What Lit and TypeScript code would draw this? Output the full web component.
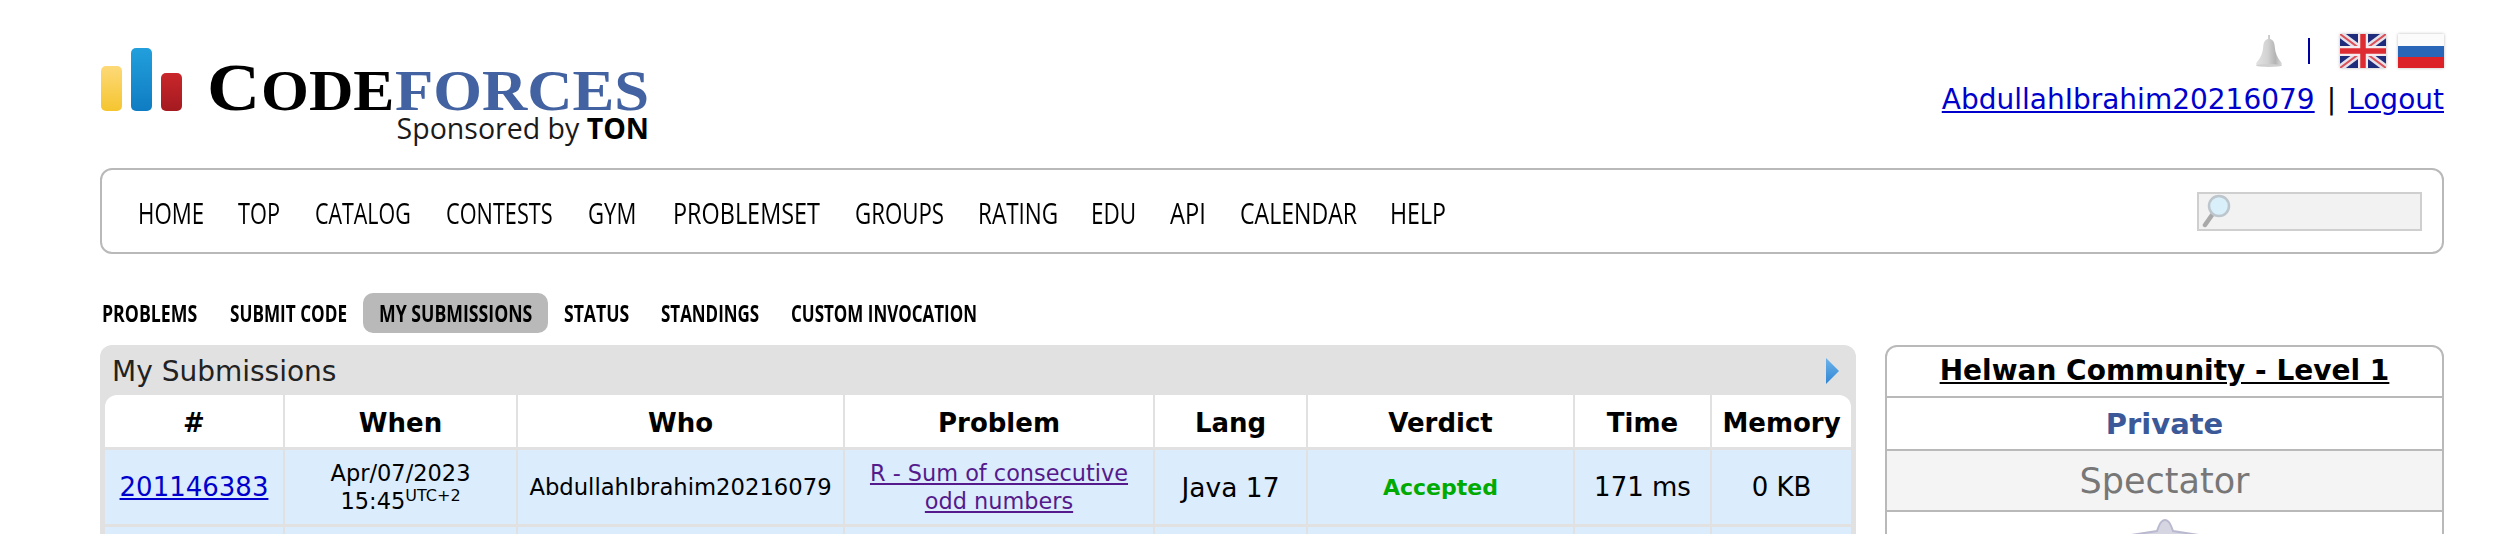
import { LitElement, html, css, svg } from "lit";
import { customElement } from "lit/decorators.js";

// label, text width, cell width: no condensed face here, so labels get squeezed to the widths below
const MENU: [string, number, number][] = [
  ["HOME", 66, 100], ["TOP", 42, 77], ["CATALOG", 96, 131], ["CONTESTS", 107, 142], ["GYM", 48, 85], ["PROBLEMSET", 147, 182],
  ["GROUPS", 89, 123], ["RATING", 80, 113], ["EDU", 45, 79], ["API", 36, 70], ["CALENDAR", 117, 150], ["HELP", 56, 56],
];
const TABS: [string, number][] = [
  ["PROBLEMS", 95.5], ["SUBMIT CODE", 117], ["MY SUBMISSIONS", 153], ["STATUS", 65], ["STANDINGS", 98], ["CUSTOM INVOCATION", 186],
];
const COLS = [179, 233, 327, 310, 153, 267, 137, 140];
const HEADS = ["#", "When", "Who", "Problem", "Lang", "Verdict", "Time", "Memory"];

const fit = (label: string, w: number, cls = "") =>
  html`<span class="cell" style="width:${w}px"><span class="fit ${cls}" data-w=${w}>${label}</span></span>`;

const bell = svg`<svg class="bell" viewBox="0 0 32 32" width="32" height="32">
  <defs><linearGradient id="bg" x1="0" x2="1" y1="0" y2="0">
    <stop offset="0" stop-color="#e2e2e2"/><stop offset=".45" stop-color="#d2d2d2"/><stop offset=".75" stop-color="#b4b4b4"/><stop offset="1" stop-color="#dcdcdc"/>
  </linearGradient></defs>
  <path d="M15 0h2v4c3 .8 4.500 3 4.800 8 .3 6 2.700 11 6.200 15 1.500 2 1 3.500-1 3.500H5c-2 0-2.500-1.500-1-3.500 3.500-4 5.900-9 6.200-15 .3-5 1.800-7.200 4.800-8z" fill="url(#bg)"/>
  <ellipse cx="16" cy="30.500" rx="13" ry="1.500" fill="#cfcfcf"/>
</svg>`;

const ukFlag = svg`<svg class="flag" viewBox="0 0 46 34" width="46" height="34" preserveAspectRatio="none">
  <rect width="46" height="34" fill="#1f2c7c"/>
  <path d="M0 0L46 34M46 0L0 34" stroke="#e6e2ea" stroke-width="7"/>
  <path d="M0 0L46 34M46 0L0 34" stroke="#dc5058" stroke-width="2"/>
  <path d="M23 0V34M0 17H46" stroke="#f4ecee" stroke-width="10"/>
  <path d="M23 0V34M0 17H46" stroke="#dd2c32" stroke-width="5.500"/>
</svg>`;

const ruFlag = svg`<svg class="flag" viewBox="0 0 46 34" width="46" height="34" preserveAspectRatio="none">
  <rect width="46" height="12" fill="#fbfbfb"/>
  <rect y="12" width="46" height="11" fill="#2a66b8"/>
  <rect y="23" width="46" height="11" fill="#dc2226"/>
</svg>`;

const magnifier = svg`<svg class="lens" viewBox="0 0 30 34" width="30" height="34">
  <path d="M10 21L3 31" stroke="#a9a9a9" stroke-width="4.500" stroke-linecap="round"/>
  <circle cx="17" cy="12" r="10" fill="#d9effa" stroke="#bcc6cc" stroke-width="2.500"/>
</svg>`;

const arrow = svg`<svg class="arrow" viewBox="0 0 14 26" width="14" height="26">
  <defs><linearGradient id="ag" x1="0" x2="0" y1="0" y2="1">
    <stop offset="0" stop-color="#6db3ea"/><stop offset="1" stop-color="#2f86d4"/>
  </linearGradient></defs>
  <path d="M1 0L14 13L1 26Z" fill="url(#ag)"/>
</svg>`;

const star = svg`<svg class="star" viewBox="0 0 84 80" width="84" height="80">
  <path d="M42 1c3 0 5 3 6.500 7L50 12l16 2.500L83 17 60 34l9 38-27-21-27 21 9-38L1 17l17-2.500L34 12l1.500-4C37 4 39 1 42 1z" fill="#d6d6e2" stroke="#b9b9cf" stroke-width="2"/>
</svg>`;

@customElement("app-root")
export class AppRoot extends LitElement {
  static styles = css`
    :host {
      display: block;
      height: 534px;
      overflow: hidden;
      background: #fff;
      font-family: "DejaVu Sans", Verdana, sans-serif;
      color: #000;
    }
    .page {
      padding: 0 62px 0 100px;
    }
    a {
      color: #0000cc;
    }
    .cell {
      display: block;
    }
    .fit {
      display: inline-block;
      white-space: nowrap;
      transform-origin: 0 50%;
    }

    .header {
      height: 168px;
      display: flex;
      justify-content: space-between;
    }
    .brand {
      display: flex;
      padding-top: 48px;
      height: 100px;
    }
    .bars {
      display: flex;
      align-items: flex-end;
      gap: 9px;
      height: 63px;
      margin-right: 27px;
      padding-left: 1px;
    }
    .bar {
      width: 21px;
      border-radius: 5px;
    }
    .bar.y {
      height: 45px;
      background: linear-gradient(#fdd978, #f5c52f);
    }
    .bar.b {
      height: 63px;
      background: linear-gradient(#229fdc, #0f7cc2);
    }
    .bar.r {
      height: 38px;
      background: linear-gradient(#c9272b, #a31a20);
    }
    .wordmark {
      margin-top: 11px;
    }
    .cf {
      display: flex;
      align-items: baseline;
      height: 52px;
      margin-left: -2px;
      font-family: "Liberation Serif", serif;
      font-weight: 700;
      font-size: 56px;
      line-height: 56px;
    }
    .cf .big {
      font-size: 68px;
    }
    .cf .blue {
      color: #4362a1;
    }
    .cf .cell + .cell {
      margin-left: 1px;
    }
    .sponsor {
      font-family: "Open Sans", sans-serif;
      font-size: 28.5px;
      line-height: 30px;
      text-align: right;
      margin-top: 2px;
      color: #1a1a1a;
    }
    .sponsor b {
      color: #000;
      font-weight: 700;
    }
    .user {
      padding-top: 34px;
      display: flex;
      flex-direction: column;
      align-items: flex-end;
    }
    .icons {
      display: flex;
      align-items: center;
      height: 34px;
    }
    .bell {
      margin-right: 23px;
      filter: blur(0.5px);
    }
    .vr {
      width: 2px;
      height: 26px;
      background: #0000a0;
      margin-right: 30px;
    }
    .flag {
      display: block;
      margin-left: 12px;
      box-shadow: 0 0 3px #bbb;
      filter: blur(0.5px);
    }
    .vr + .flag {
      margin-left: 0;
    }
    .links {
      font-size: 28px;
      line-height: 34px;
      margin-top: 15px;
      white-space: nowrap;
    }
    .links .sep {
      margin: 0 12px;
    }

    .menu {
      height: 86px;
      box-sizing: border-box;
      border: 2px solid #b9b9b9;
      border-radius: 12px;
      display: flex;
      align-items: center;
      justify-content: space-between;
      padding: 0 20px 0 36px;
    }
    .menu ul,
    .tabs {
      list-style: none;
      margin: 0;
      padding: 0;
      display: flex;
    }
    .menu li {
      font-family: "Open Sans", sans-serif;
      font-size: 29px;
      line-height: 40px;
      padding-top: 3px;
    }
    .search {
      box-sizing: border-box;
      width: 225px;
      height: 39px;
      border: 2px solid #cfcfcf;
      background: #f2f2f2;
      padding-left: 3px;
      display: flex;
      align-items: center;
    }
    .lens {
      display: block;
    }

    .tabs {
      margin: 39px 0 12px -14px;
      height: 40px;
    }
    .tabs li {
      padding: 0 16px;
      border-radius: 10px;
      font-family: "Open Sans", sans-serif;
      font-size: 23px;
      font-weight: 700;
      line-height: 40px;
    }
    .tabs li.on {
      background: #b9b9b9;
    }

    .content {
      display: flex;
      gap: 29px;
      align-items: flex-start;
    }
    .panel {
      width: 1756px;
      flex: none;
      background: #e1e1e1;
      border-radius: 12px 12px 0 0;
      padding: 0 5px;
      box-sizing: border-box;
    }
    .caption {
      height: 48px;
      padding: 2px 12px 0 7px;
      display: flex;
      align-items: center;
      justify-content: space-between;
      font-size: 28px;
      color: #222;
    }
    table {
      border-collapse: collapse;
      table-layout: fixed;
      width: 1746px;
      background: #fff;
      border-radius: 12px 12px 0 0;
      overflow: hidden;
    }
    th,
    td {
      padding: 0;
      text-align: center;
      border-left: 2px solid #e1e1e1;
    }
    th:first-child,
    td:first-child {
      border-left: 0;
    }
    th {
      height: 49px;
      padding-top: 3px;
      font-size: 26px;
      font-weight: 700;
      border-bottom: 3px solid #e1e1e1;
    }
    td {
      height: 74px;
      background: #dbecfd;
      font-size: 26px;
      border-bottom: 3px solid #e1e1e1;
    }
    .when {
      font-size: 22.5px;
    }
    .who {
      font-size: 22.7px;
    }
    .prob {
      font-size: 22.4px;
    }
    .when,
    .prob {
      line-height: 28px;
    }
    .when sup {
      font-size: 16px;
      line-height: 0;
    }
    .prob a {
      color: #551a8b;
    }
    td.lang {
      font-size: 26.5px;
    }
    .ok {
      color: #0a0;
      font-size: 22px;
      font-weight: 700;
    }

    .side {
      flex: 1;
      border: 2px solid #b9b9b9;
      border-radius: 12px 12px 0 0;
      box-sizing: border-box;
      text-align: center;
    }
    .side > div {
      border-bottom: 2px solid #b9b9b9;
    }
    .side .name {
      height: 49px;
      line-height: 48px;
      font-size: 28px;
      font-weight: 700;
      text-decoration: underline;
    }
    .side .kind {
      height: 51px;
      line-height: 52px;
      font-size: 29px;
      font-weight: 700;
      color: #3b5998;
    }
    .side .phase {
      height: 59px;
      line-height: 60px;
      font-size: 35px;
      color: #777;
      background: #f4f4f4;
    }
    .side .rate {
      height: 60px;
      border-bottom: 0;
      padding-top: 7px;
      box-sizing: border-box;
    }
    .star {
      filter: blur(0.7px);
    }
  `;

  firstUpdated() {
    this.renderRoot.querySelectorAll<HTMLElement>(".fit").forEach((el) => {
      const w = Number(el.dataset.w);
      el.style.transform = `scaleX(${w / el.offsetWidth})`;
    });
  }

  render() {
    return html`
      <div class="page">
        <div class="header">
          <div class="brand">
            <div class="bars">
              <div class="bar y"></div>
              <div class="bar b"></div>
              <div class="bar r"></div>
            </div>
            <div class="wordmark">
              <div class="cf">${fit("C", 53, "big")}${fit("ODE", 133)}${fit("FORCES", 254, "blue")}</div>
              <div class="sponsor">Sponsored by <b>TON</b></div>
            </div>
          </div>
          <div class="user">
            <div class="icons">${bell}<div class="vr"></div>${ukFlag}${ruFlag}</div>
            <div class="links"><a href="#">AbdullahIbrahim20216079</a><span class="sep">|</span><a href="#">Logout</a></div>
          </div>
        </div>

        <div class="menu">
          <ul>${MENU.map(([m, w, cell]) => html`<li style="width:${cell}px">${fit(m, w)}</li>`)}</ul>
          <div class="search">${magnifier}</div>
        </div>

        <ul class="tabs">
          ${TABS.map(([t, w]) => html`<li class=${t === "MY SUBMISSIONS" ? "on" : ""}>${fit(t, w)}</li>`)}
        </ul>

        <div class="content">
          <div class="panel">
            <div class="caption"><span>My Submissions</span>${arrow}</div>
            <table>
              <colgroup>${COLS.map((w) => html`<col style="width:${w}px" />`)}</colgroup>
              <tr>${HEADS.map((h) => html`<th>${h}</th>`)}</tr>
              <tr>
                <td><a href="#">201146383</a></td>
                <td class="when">Apr/07/2023<br />15:45<sup>UTC+2</sup></td>
                <td class="who">AbdullahIbrahim20216079</td>
                <td class="prob"><a href="#">R - Sum of consecutive<br />odd numbers</a></td>
                <td class="lang">Java 17</td>
                <td class="ok">Accepted</td>
                <td>171 ms</td>
                <td>0 KB</td>
              </tr>
              <tr>${COLS.map(() => html`<td></td>`)}</tr>
            </table>
          </div>
          <div class="side">
            <div class="name">Helwan Community - Level 1</div>
            <div class="kind">Private</div>
            <div class="phase">Spectator</div>
            <div class="rate">${star}</div>
          </div>
        </div>
      </div>
    `;
  }
}
